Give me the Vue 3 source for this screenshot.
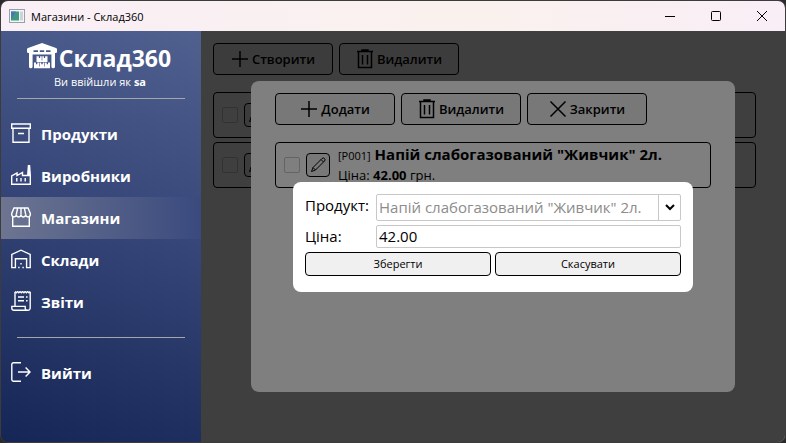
<script setup>
import { ref } from 'vue'

const active = ref('stores')
const price = ref('42.00')
const product = ref('P001')
const stores = [1, 2]

const menu = [
  { id: 'products', label: 'Продукти', paths: ['M.7 1h18.600v4.200H.7z', 'M2 5.200v14h16v-14', 'M7 10.500h6'] },
  { id: 'makers', label: 'Виробники', paths: ['M.7 19.300V11l5.300-3v2.600L11.500 7.500v3H19.300v8.800z', 'M5.800 13v3.400M10 13v3.400M14.200 13v3.400'], solid: 'M16 10.500 16.800 0h2.400l.8 10.500z' },
  { id: 'stores', label: 'Магазини', paths: ['M3 1h14l2.300 5.400v1.200a2.300 2.300 0 0 1-4.600 0 2.350 2.350 0 0 1-4.700 0 2.350 2.350 0 0 1-4.700 0 2.300 2.300 0 0 1-4.600 0V6.400z', 'M5.300 7.600 6.600 1M10 7.600V1M14.700 7.600 13.400 1', 'M1.700 10v9.200h16.600V10'] },
  { id: 'warehouses', label: 'Склади', paths: ['M.8 18.600V5.400L10 1.200l9.200 4.200v13.200h-3.600V9.800H4.400v8.800z', 'M7.200 18.500h1.400M11.400 18.500h1.400M9.300 14.800h1.400'] },
  { id: 'reports', label: 'Звіти', paths: ['M4 15V1M19.200 1v16a2.200 2.200 0 0 1-2.200 2.300H3A2.200 2.200 0 0 1 .8 17.200V15.400h13.400v1.800a2.200 2.200 0 0 0 2.600 2.100', 'M4 .6l1.300 1.200L6.600.6l1.200 1.200L9.100.6l1.200 1.200L11.600.6l1.300 1.200L14.100.6l1.300 1.200L16.600.6l1.300 1.200L19.200.6', 'M7 6h6M7 9.800h6M15 6h1.600M15 9.800h1.600'] },
]
</script>

<template>
  <div class="window">
    <header class="titlebar">
      <svg class="app-icon" viewBox="0 0 16 14" aria-hidden="true">
        <rect x=".5" y=".5" width="15" height="13" fill="#f4f6f6" stroke="#98a2a6" />
        <rect x="2" y="2.5" width="8" height="9" fill="#3f9a80" />
        <path d="M2 2.5h5l-5 8z" fill="#4a78b4" />
        <rect x="11" y="2.5" width="3" height="9" fill="#cbd5d8" />
      </svg>
      <span class="caption">Магазини - Склад360</span>
      <div class="controls">
        <button type="button" aria-label="Згорнути">
          <svg viewBox="0 0 12 12"><path d="M1 6.5h10" /></svg>
        </button>
        <button type="button" aria-label="Розгорнути">
          <svg viewBox="0 0 12 12"><rect x="1.5" y="1.5" width="9" height="9" rx="1" /></svg>
        </button>
        <button type="button" aria-label="Закрити вікно">
          <svg viewBox="0 0 12 12"><path d="M1 1l10 10M11 1 1 11" /></svg>
        </button>
      </div>
    </header>

    <div class="body">
      <aside class="sidebar">
        <div class="brand">
          <svg viewBox="0 0 30 26" aria-hidden="true">
            <path fill="#fff" fill-rule="evenodd" d="M15 0 29 5a1.500 1.500 0 0 1 1 1.500V8.800A1.200 1.200 0 0 1 28.800 10H28v13.800a1.400 1.400 0 0 1-1.400 1.400h-.8a1.400 1.400 0 0 1-1.400-1.400V11.600H5.600v12.200a1.400 1.400 0 0 1-1.400 1.400h-.8A1.400 1.400 0 0 1 2 23.800V10h-.8A1.200 1.200 0 0 1 0 8.800V6.500A1.500 1.500 0 0 1 1 5zM6.500 7.300v1.600h4.500V7.300zm6.300 0v1.600h4.400V7.300zm6.200 0v1.600h4.500V7.300z" />
            <path fill="#fff" fill-rule="evenodd" d="M9.500 13.300h11v5.700h-11zM11.900 13.300v1.700h1.200v-1.700zm5 0v1.700h1.200v-1.700zM14.700 13.300v4.200h.6v-4.200z" />
            <path fill="#fff" fill-rule="evenodd" d="M7 19.600h16v5.600H7zM9 19.600v1.700h1.300v-1.700zm5.300 0v1.700h1.400v-1.700zm5.400 0v1.700H21v-1.700zM12 19.600v4h.6v-4zm5.400 0v4h.6v-4z" />
          </svg>
          <h1>Склад360</h1>
        </div>
        <p class="user">Ви ввійшли як <b>sa</b></p>
        <hr>
        <nav class="menu">
          <a
            v-for="item in menu"
            :key="item.id"
            href="#"
            :class="{ active: active === item.id }"
            @click.prevent="active = item.id"
          >
            <svg viewBox="0 0 20 20" aria-hidden="true">
              <path v-for="d in item.paths" :key="d" :d="d" />
              <path v-if="item.solid" :d="item.solid" fill="currentColor" stroke="none" />
            </svg>
            <span>{{ item.label }}</span>
          </a>
        </nav>
        <hr>
        <nav class="menu">
          <a href="#" @click.prevent>
            <svg viewBox="0 0 20 20" aria-hidden="true">
              <path d="M10 .8H2.400A1.600 1.600 0 0 0 .8 2.400v15.200a1.600 1.600 0 0 0 1.600 1.600H10M7 10h12M14.600 5.600 19 10l-4.400 4.400" />
            </svg>
            <span>Вийти</span>
          </a>
        </nav>
      </aside>

      <main class="content">
        <div class="page">
          <div class="toolbar">
            <button type="button">
              <svg viewBox="0 0 18 20"><path d="M9 2v16M1 10h16" /></svg>Створити
            </button>
            <button type="button">
              <svg viewBox="0 0 18 20"><path d="M1 2.500h16M6 2V1h6v1M2.500 3v15.500h13V3M6.500 6v9.500M11.500 6v9.500" /></svg>Видалити
            </button>
          </div>
          <ul class="list">
            <li v-for="s in stores" :key="s" class="row">
              <input type="checkbox" aria-label="Вибрати магазин">
              <button type="button" class="edit" aria-label="Редагувати магазин">
                <svg viewBox="0 0 16 16"><path d="M1.500 14.500 3 10.500 12 1.500a1.600 1.600 0 0 1 2.500 2.500L5.500 13zM3 10.500 5.500 13M11 2.500 13.500 5" /></svg>
              </button>
            </li>
          </ul>
        </div>

        <div class="shade page-shade">
          <section class="panel">
            <div class="toolbar">
              <button type="button">
                <svg viewBox="0 0 18 20"><path d="M9 2v16M1 10h16" /></svg>Додати
              </button>
              <button type="button">
                <svg viewBox="0 0 18 20"><path d="M1 2.500h16M6 2V1h6v1M2.500 3v15.500h13V3M6.500 6v9.500M11.500 6v9.500" /></svg>Видалити
              </button>
              <button type="button">
                <svg viewBox="0 0 18 20"><path d="M1.500 2.500l15 15M16.500 2.500l-15 15" /></svg>Закрити
              </button>
            </div>
            <ul class="list">
              <li class="row">
                <input type="checkbox" aria-label="Вибрати продукт">
                <button type="button" class="edit" aria-label="Редагувати продукт">
                  <svg viewBox="0 0 16 16"><path d="M1.500 14.500 3 10.500 12 1.500a1.600 1.600 0 0 1 2.500 2.500L5.500 13zM3 10.500 5.500 13M11 2.500 13.500 5" /></svg>
                </button>
                <div class="info">
                  <div class="name"><small>[P001]</small> <b>Напій слабогазований "Живчик" 2л.</b></div>
                  <div class="cost">Ціна: <b>42.00</b> грн.</div>
                </div>
              </li>
            </ul>
          </section>
        </div>

        <div class="shade">
          <form class="dialog" @submit.prevent>
            <div class="fields">
              <label for="product">Продукт:</label>
              <div class="combo">
                <select id="product" v-model="product" disabled>
                  <option value="P001">Напій слабогазований "Живчик" 2л.</option>
                </select>
                <span class="arrow">
                  <svg viewBox="0 0 10 8" aria-hidden="true"><path d="M1 2l4 4 4-4" /></svg>
                </span>
              </div>
              <label for="price">Ціна:</label>
              <input id="price" v-model="price" type="text">
            </div>
            <div class="actions">
              <button type="submit">Зберегти</button>
              <button type="button">Скасувати</button>
            </div>
          </form>
        </div>
      </main>
    </div>
  </div>
</template>

<style>
body {
  background: #2b2b2b;
}
</style>

<style scoped>
* {
  box-sizing: border-box;
}

.window {
  display: flex;
  flex-direction: column;
  height: 100vh;
  border: 1px solid #3c3c3c;
  border-radius: 8px;
  overflow: hidden;
  font-family: "Open Sans", "Noto Sans", sans-serif;
  color: #000;
}

button,
input,
select {
  font-family: inherit;
  color: inherit;
  margin: 0;
}

svg {
  flex: none;
  fill: none;
  stroke: currentColor;
}

.titlebar {
  display: flex;
  align-items: center;
  flex: none;
  height: 30px;
  padding-left: 8px;
  background: linear-gradient(90deg, #f9eff6, #faf1ee 60%, #f9eef6);
}

.app-icon {
  width: 16px;
  height: 14px;
  stroke: none;
}

.caption {
  margin-left: 6px;
  font-size: 11px;
}

.controls {
  display: flex;
  margin-left: auto;
}

.controls button {
  display: flex;
  align-items: center;
  justify-content: center;
  width: 46px;
  height: 30px;
  padding: 0;
  border: 0;
  background: none;
}

.controls svg {
  width: 12px;
  height: 12px;
}

.body {
  display: flex;
  flex: 1;
  min-height: 0;
}

.sidebar {
  flex: none;
  width: 200px;
  padding-top: 12px;
  color: #fff;
  background: linear-gradient(20deg, #152555, #364678 55%, #50608f);
}

.brand {
  display: flex;
  align-items: center;
  justify-content: center;
  gap: 2px;
  height: 30px;
  padding-right: 4px;
}

.brand svg {
  width: 30px;
  height: 26px;
  margin-bottom: 4px;
  stroke: none;
}

h1 {
  margin: 0;
  font-size: 23px;
  line-height: 30px;
}

.user {
  margin: 0;
  padding-right: 2px;
  font-size: 11px;
  line-height: 18px;
  text-align: center;
}

hr {
  height: 1px;
  margin: 7px 16px 14px;
  border: 0;
  background: #a3a6aa;
}

.menu a {
  display: flex;
  align-items: center;
  gap: 10px;
  height: 42px;
  padding-left: 10px;
  color: inherit;
  font-size: 15px;
  font-weight: 700;
  text-decoration: none;
}

.menu a.active {
  background: linear-gradient(90deg, #6d7591, #3a4a7e);
}

.menu svg {
  width: 20px;
  height: 20px;
  margin-bottom: 2px;
  stroke-width: 1.4px;
}

.menu + hr {
  margin-top: 14px;
}

.content {
  position: relative;
  flex: 1;
  min-width: 0;
  background: #fff;
}

.page {
  padding: 12px 29px 12px 12px;
}

.toolbar {
  display: flex;
  gap: 6px;
}

.toolbar button {
  display: flex;
  align-items: center;
  justify-content: center;
  gap: 3px;
  width: 120px;
  height: 32px;
  padding: 0;
  border: 1px solid #000;
  border-radius: 4px;
  background: #f0f0f0;
  font-size: 13px;
  font-weight: 600;
}

.toolbar svg {
  width: 18px;
  height: 20px;
  stroke-width: 1.5px;
}

.list {
  display: grid;
  gap: 4px;
  margin: 17px 0 0;
  padding: 0;
  list-style: none;
}

.row {
  display: flex;
  align-items: center;
  gap: 6px;
  height: 46px;
  padding-left: 8px;
  border: 1px solid #000;
  border-radius: 4px;
}

.row input {
  appearance: none;
  width: 16px;
  height: 16px;
  border: 1px solid #c8c8c8;
  border-radius: 2px;
}

.edit {
  display: flex;
  align-items: center;
  justify-content: center;
  width: 24px;
  height: 24px;
  padding: 0;
  border: 1px solid #000;
  border-radius: 4px;
  background: #f0f0f0;
}

.edit svg {
  width: 16px;
  height: 16px;
}

.info {
  padding: 0 0 2px 2px;
  white-space: nowrap;
}

.name {
  font-size: 15px;
  line-height: 20px;
}

.name small {
  font-size: 11px;
}

.cost {
  font-size: 13px;
  line-height: 18px;
}

.shade {
  position: absolute;
  inset: 0;
  display: grid;
  place-items: center;
  background: rgba(0, 0, 0, 0.5);
}

.page-shade {
  place-items: stretch;
  padding: 50px;
}

.panel {
  padding: 12px 24px;
  border-radius: 8px;
  background: #fff;
}

.dialog {
  display: grid;
  gap: 4px;
  width: 400px;
  padding: 12px 12px 16px;
  border-radius: 8px;
  background: #fff;
}

.fields {
  display: grid;
  grid-template-columns: 67px 1fr;
  grid-template-rows: 27px 23px;
  gap: 4px;
}

.fields label {
  font-size: 15px;
  line-height: 23px;
}

.combo {
  display: grid;
  grid-template-columns: 1fr 22px;
  border: 1px solid #c8c8c8;
  border-radius: 2px;
}

select {
  appearance: none;
  min-width: 0;
  padding: 0 2px;
  border: 0;
  background: none;
  font-size: 15px;
}

select:disabled {
  color: #8c8c8c;
  opacity: 1;
}

.arrow {
  display: flex;
  align-items: center;
  justify-content: center;
  border-left: 1px solid #c8c8c8;
}

.arrow svg {
  width: 10px;
  height: 8px;
  stroke-width: 2px;
}

.fields input {
  width: 100%;
  min-width: 0;
  padding: 0 2px;
  border: 1px solid #c8c8c8;
  border-radius: 2px;
  font-size: 15px;
}

.actions {
  display: grid;
  grid-template-columns: 1fr 1fr;
  gap: 4px;
}

.actions button {
  height: 24px;
  padding: 0;
  border: 1px solid #000;
  border-radius: 4px;
  background: #f0f0f0;
  font-size: 11px;
}
</style>
